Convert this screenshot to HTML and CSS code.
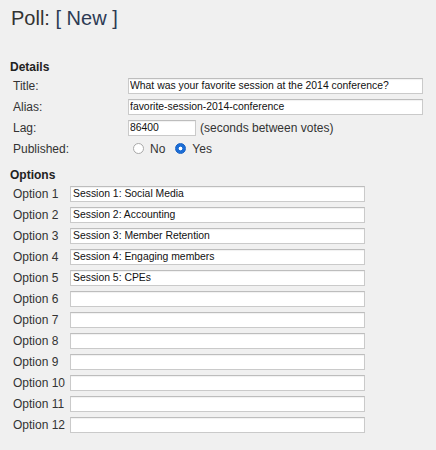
FILE: index.html
```html
<!DOCTYPE html>
<html lang="en">
<head>
<meta charset="utf-8">
<title>Poll: [ New ]</title>
<link rel="stylesheet" href="styles.css">
</head>
<body>
<h1 class="page-title">Poll: <span class="page-sub">[ New ]</span></h1>

<section class="group">
  <h2 class="group-title">Details</h2>
  <div class="form-grid details">
    <label class="field-label" for="title">Title:</label>
    <div class="field-cell"><input class="field wide" id="title" type="text" value="What was your favorite session at the 2014 conference?"></div>

    <label class="field-label" for="alias">Alias:</label>
    <div class="field-cell"><input class="field wide" id="alias" type="text" value="favorite-session-2014-conference"></div>

    <label class="field-label" for="lag">Lag:</label>
    <div class="field-cell"><input class="field short" id="lag" type="text" value="86400"><span class="hint">(seconds between votes)</span></div>

    <span class="field-label">Published:</span>
    <div class="field-cell radios">
      <label class="radio"><input type="radio" name="published" value="0"><span>No</span></label>
      <label class="radio"><input type="radio" name="published" value="1" checked><span>Yes</span></label>
    </div>
  </div>
</section>

<section class="group options-group">
  <h2 class="group-title">Options</h2>
  <div class="form-grid options">
    <label class="field-label" for="o1">Option 1</label>
    <div class="field-cell"><input class="field wide" id="o1" type="text" value="Session 1: Social Media"></div>
    <label class="field-label" for="o2">Option 2</label>
    <div class="field-cell"><input class="field wide" id="o2" type="text" value="Session 2: Accounting"></div>
    <label class="field-label" for="o3">Option 3</label>
    <div class="field-cell"><input class="field wide" id="o3" type="text" value="Session 3: Member Retention"></div>
    <label class="field-label" for="o4">Option 4</label>
    <div class="field-cell"><input class="field wide" id="o4" type="text" value="Session 4: Engaging members"></div>
    <label class="field-label" for="o5">Option 5</label>
    <div class="field-cell"><input class="field wide" id="o5" type="text" value="Session 5: CPEs"></div>
    <label class="field-label" for="o6">Option 6</label>
    <div class="field-cell"><input class="field wide" id="o6" type="text" value=""></div>
    <label class="field-label" for="o7">Option 7</label>
    <div class="field-cell"><input class="field wide" id="o7" type="text" value=""></div>
    <label class="field-label" for="o8">Option 8</label>
    <div class="field-cell"><input class="field wide" id="o8" type="text" value=""></div>
    <label class="field-label" for="o9">Option 9</label>
    <div class="field-cell"><input class="field wide" id="o9" type="text" value=""></div>
    <label class="field-label" for="o10">Option 10</label>
    <div class="field-cell"><input class="field wide" id="o10" type="text" value=""></div>
    <label class="field-label" for="o11">Option 11</label>
    <div class="field-cell"><input class="field wide" id="o11" type="text" value=""></div>
    <label class="field-label" for="o12">Option 12</label>
    <div class="field-cell"><input class="field wide" id="o12" type="text" value=""></div>
  </div>
</section>
</body>
</html>
```

FILE: styles.css
```css
html, body {
  margin: 0;
  padding: 0;
  background: #f0f0f0;
}

body {
  font-family: "Liberation Sans", Arial, Helvetica, sans-serif;
  color: #333;
  font-size: 12px;
}

.page-title {
  margin: 0;
  padding: 6px 0 0 11px;
  font-size: 20px;
  line-height: 24px;
  font-weight: normal;
  color: #333;
}

.page-sub {
  color: #2c3a54;
}

.group {
  margin: 30px 0 0 0;
}

.options-group {
  margin-top: 9px;
}

.group-title {
  margin: 0;
  padding-left: 10px;
  font-size: 12px;
  line-height: 14px;
  font-weight: bold;
  color: #222;
}

.form-grid {
  display: grid;
  grid-auto-rows: 21px;
  align-items: center;
  margin-top: 1px;
  padding-left: 13px;
}

.details {
  grid-template-columns: 115px 1fr;
}

.options {
  grid-template-columns: 57px 1fr;
}

.field-label {
  font-size: 12px;
  line-height: 14px;
  color: #333;
  white-space: nowrap;
}

.field-cell {
  display: flex;
  align-items: center;
}

.field {
  box-sizing: border-box;
  height: 16px;
  margin: 0;
  padding: 0 2px;
  border: 1px solid #cacaca;
  border-top-color: #bdbdbd;
  border-radius: 0;
  background: #fff;
  box-shadow: inset 0 1px 1px rgba(0, 0, 0, 0.06);
  font-family: "Liberation Sans", Arial, Helvetica, sans-serif;
  font-size: 10.4px;
  color: #111;
  outline: none;
}

.details .field {
  padding-left: 1px;
}

.wide {
  width: 295px;
}

.short {
  width: 68px;
}

.hint {
  margin-left: 4px;
  font-size: 12px;
  color: #333;
}

.radios {
  padding-left: 5px;
}

.radio {
  display: flex;
  align-items: center;
  gap: 6px;
  font-size: 12px;
  color: #333;
}

.radio + .radio {
  margin-left: 10px;
}

.radio input {
  -webkit-appearance: none;
  appearance: none;
  box-sizing: border-box;
  width: 11px;
  height: 11px;
  margin: 0;
  border: 1px solid #a9a9a9;
  border-radius: 50%;
  background: #fff;
}

.radio input:checked {
  border-color: #1761c4;
  background: radial-gradient(circle, #fff 0 1.6px, #1b6dd6 2.2px);
}
```
